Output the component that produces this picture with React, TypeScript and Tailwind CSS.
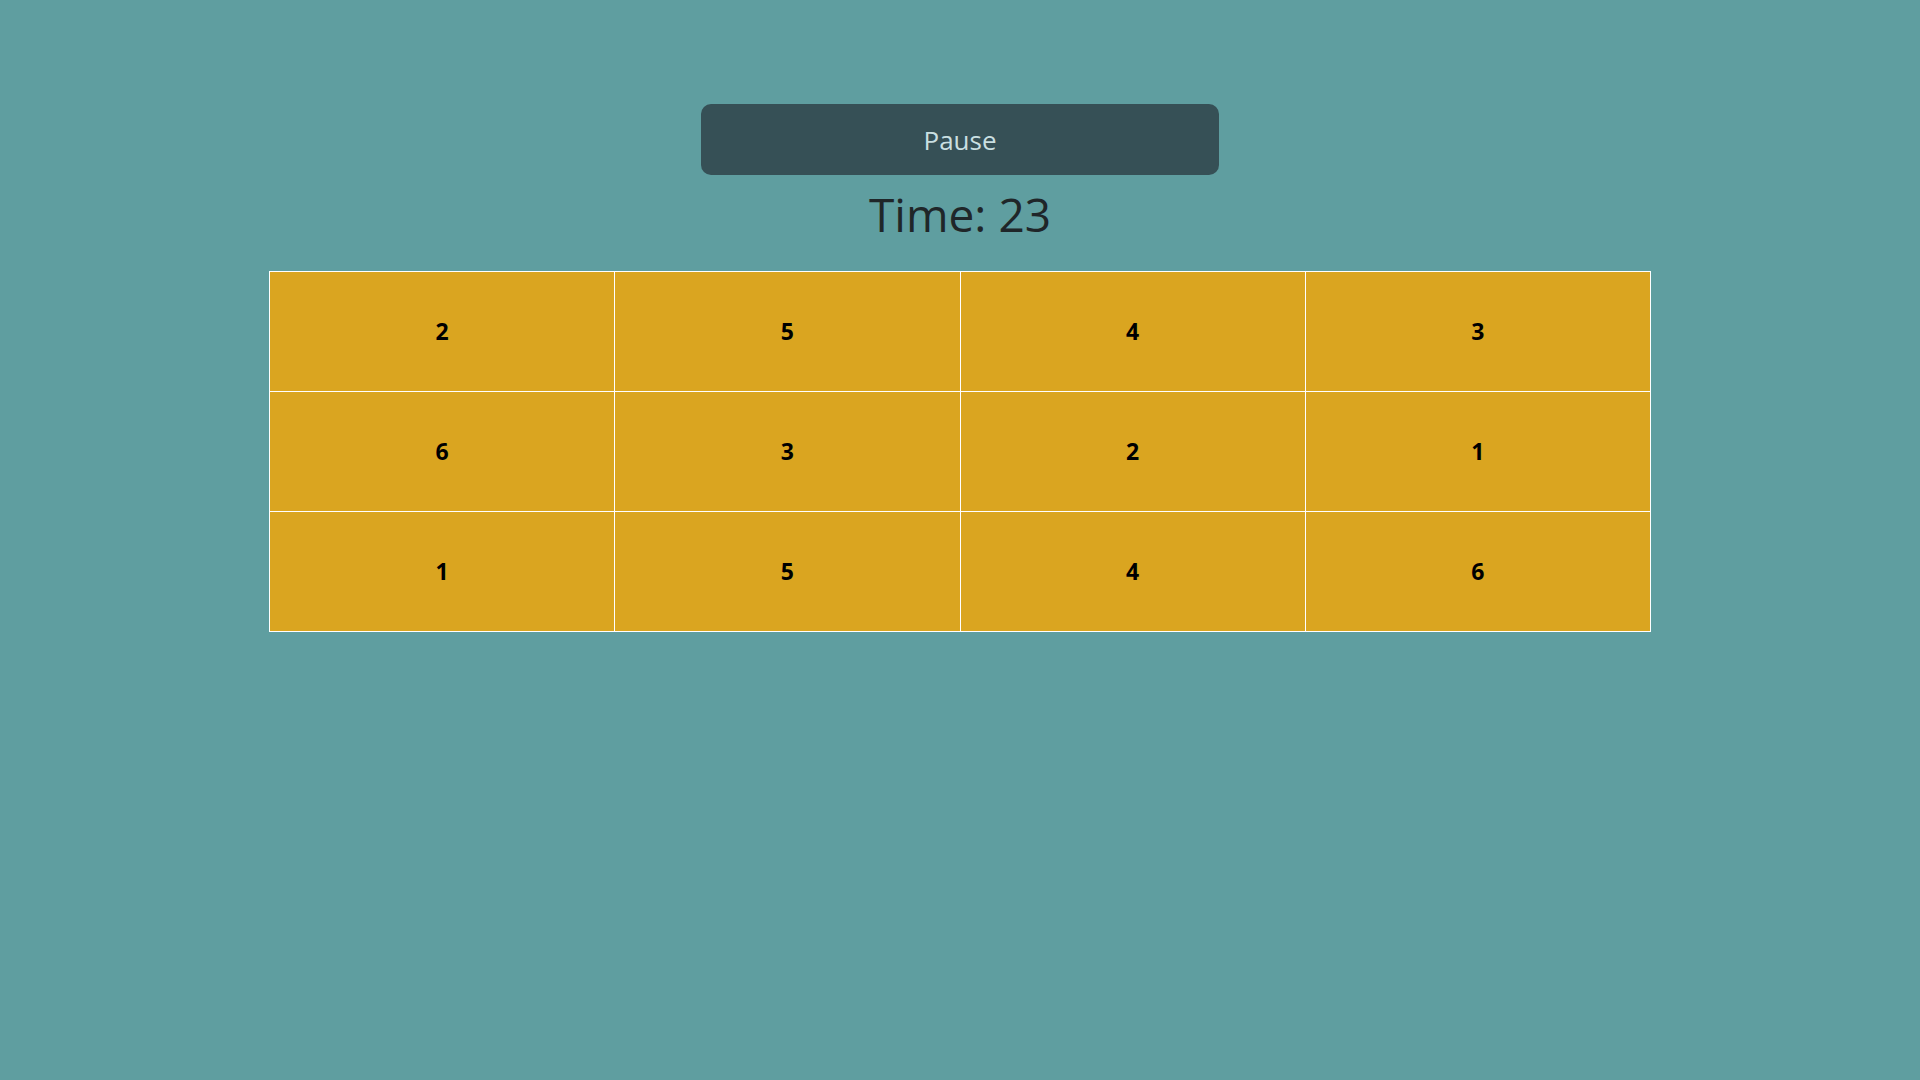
const rows = [
  [2, 5, 4, 3],
  [6, 3, 2, 1],
  [1, 5, 4, 6],
]

function App() {
  return (
    <div className="min-h-screen w-full bg-[#5f9ea0] flex flex-col items-center pt-[104px] font-['Open_Sans',sans-serif]">
      <button className="w-[518px] h-[71px] rounded-[10px] bg-[#365056] text-[#c9dfe1] text-[26px] leading-none">
        Pause
      </button>
      <h2 className="h-[78px] mb-[18px] flex items-center text-[46px] font-medium text-[#1f2629] leading-none">
        Time: 23
      </h2>
      <div className="w-[1382px] grid grid-cols-4 border-t border-l border-white">
        {rows.flat().map((n, i) => (
          <div
            key={i}
            className="h-[120px] bg-[#daa520] border-r border-b border-white flex items-center justify-center text-[23px] font-bold text-black"
          >
            {n}
          </div>
        ))}
      </div>
    </div>
  )
}

export default App
